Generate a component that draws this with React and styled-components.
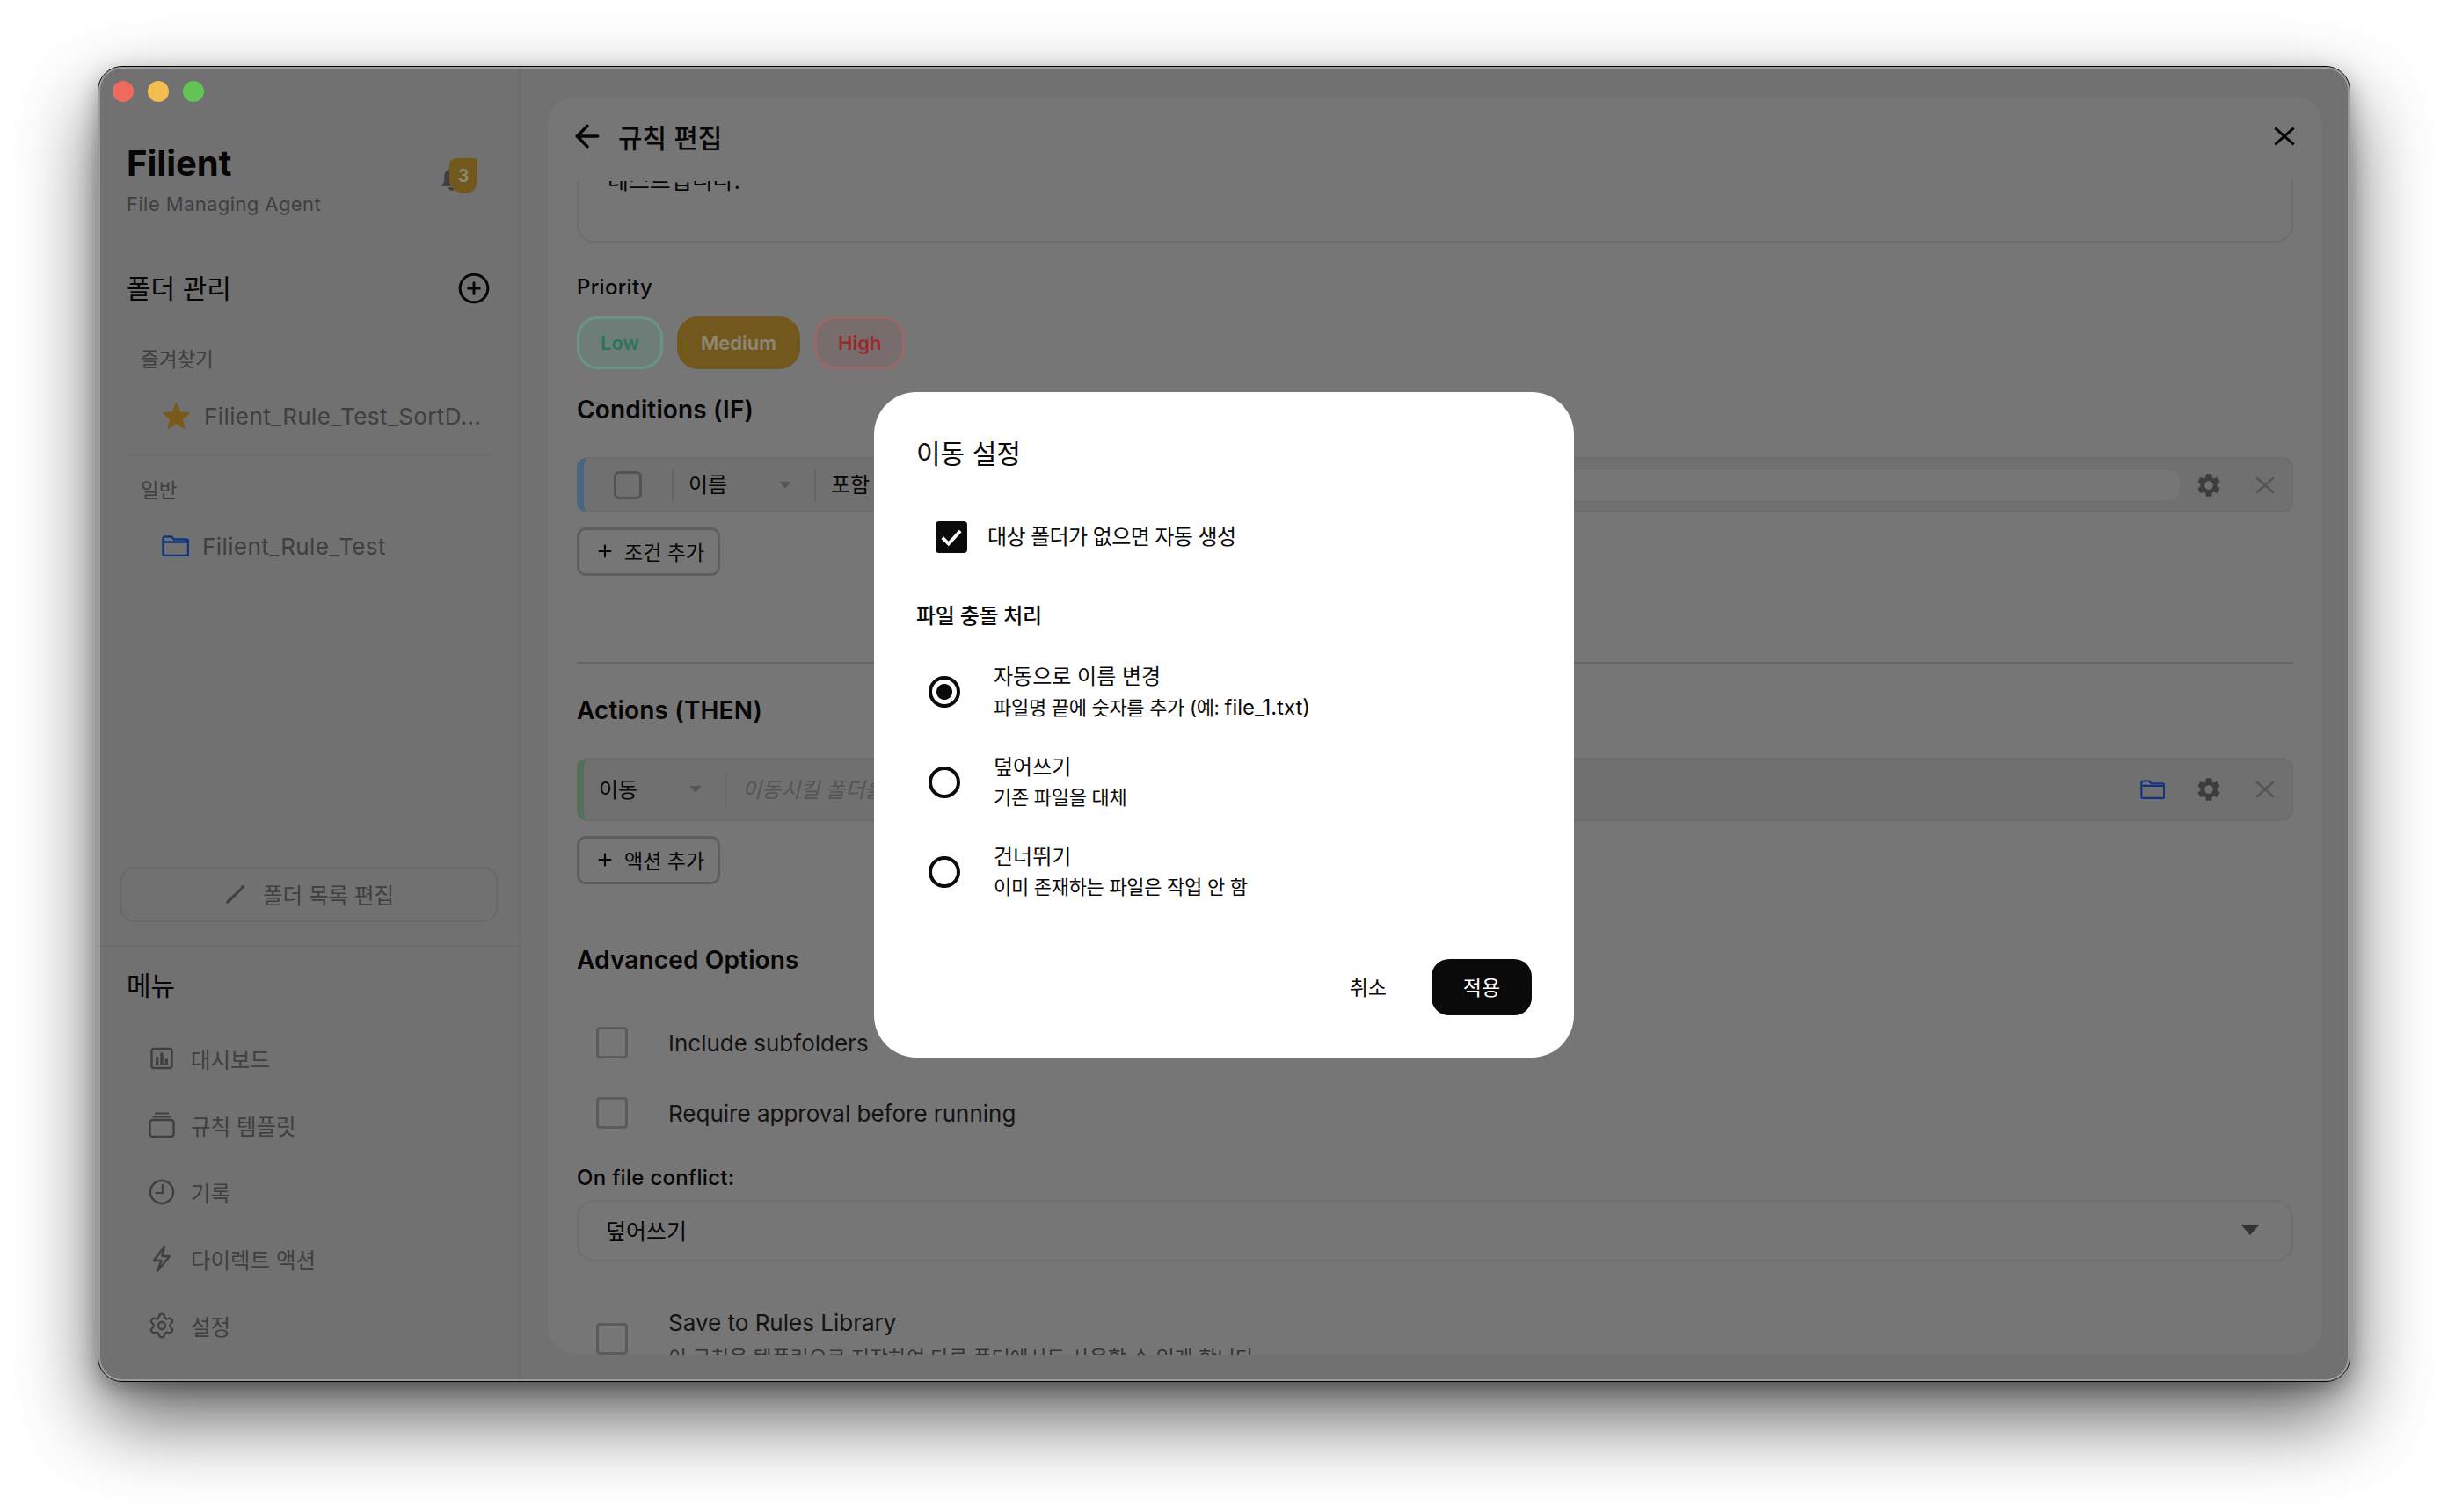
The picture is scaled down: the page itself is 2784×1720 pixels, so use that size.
import React from "react";
import styled, { createGlobalStyle } from "styled-components";
import { ArrowLeft, CirclePlus, Plus, Settings } from "lucide-react";
import { MdSettings } from "react-icons/md";

const GlobalStyle = createGlobalStyle`
  html, body {
    margin: 0;
    padding: 0;
    background: #fff;
  }
  * {
    box-sizing: border-box;
  }
  body {
    font-family: Inter, "Noto Sans CJK KR", "Liberation Sans", sans-serif;
    color: #0a0a0a;
  }
`;

const Star = () => (
  <svg width="33" height="32" viewBox="0 0 31 30">
    <path
      d="M15.5 2l3.8 9.2 10 .8-7.6 6.5 2.4 9.7-8.6-5.2-8.6 5.2 2.4-9.7L1.7 12l10-.8z"
      fill="#cd962b"
      stroke="#cd962b"
      strokeWidth="1.5"
      strokeLinejoin="round"
    />
  </svg>
);

const FolderGlyph = ({ width = 31, height = 24 }) => (
  <svg width={width} height={height} viewBox="0 0 31 24" fill="none">
    <path
      d="M1.5 3.5a2 2 0 0 1 2-2h7.5l3 3h14a2 2 0 0 1 2 2v15a1.5 1.5 0 0 1-1.5 1.5H3a1.5 1.5 0 0 1-1.5-1.5zM1.5 7.5h28"
      stroke="#1e58d3"
      strokeWidth="2.4"
    />
  </svg>
);

const Pencil = () => (
  <svg width="24" height="24" viewBox="0 0 24 24" fill="none">
    <path d="M2 22l1-3.5L19 3.5l2 2L5.5 21z" fill="#696969" />
    <circle cx="21" cy="3" r="2" fill="#696969" />
  </svg>
);

const Dashboard = () => (
  <svg width="26" height="26" viewBox="0 0 26 26" fill="none">
    <rect x="1.5" y="2" width="23" height="22" rx="2.5" stroke="#696969" strokeWidth="2.4" />
    <rect x="6" y="11" width="3.4" height="9" fill="#696969" />
    <rect x="11.3" y="6.5" width="3.4" height="13.5" fill="#696969" />
    <rect x="16.6" y="13.5" width="3.4" height="6.5" fill="#696969" />
  </svg>
);

const Templates = () => (
  <svg width="30" height="30" viewBox="0 0 30 30" fill="none">
    <path d="M7 1.5h16M4.5 5.5h21" stroke="#696969" strokeWidth="2" />
    <rect x="1.5" y="9" width="27" height="19" rx="3" stroke="#696969" strokeWidth="2.4" />
  </svg>
);

const Clock = () => (
  <svg width="30" height="30" viewBox="0 0 30 30" fill="none">
    <circle cx="15" cy="15" r="13" stroke="#696969" strokeWidth="2.4" />
    <path d="M16 6v10H7.5" stroke="#696969" strokeWidth="2.2" />
  </svg>
);

const Bolt = () => (
  <svg width="24" height="32" viewBox="0 0 24 32" fill="none">
    <path
      d="M15 2L3 18h8.5L7 30 21 13h-8.5z"
      stroke="#696969"
      strokeWidth="2.4"
      strokeLinejoin="round"
    />
  </svg>
);

const Cross = ({ size = 22, color = "#8e8e8e", weight = 2.4 }) => (
  <svg width={size} height={size} viewBox="0 0 22 22" fill="none">
    <path d="M2 3l18 16M20 3L2 19" stroke={color} strokeWidth={weight} />
  </svg>
);

const Check = () => (
  <svg width="30" height="30" viewBox="0 0 28 28" fill="none">
    <path d="M4.5 14.5l6.5 6.5L23.5 7.5" stroke="#fff" strokeWidth="3.6" />
  </svg>
);

const Caret = ({ size = 14, color = "#8e8e8e" }) => (
  <svg width={size} height={size * 0.55} viewBox="0 0 14 8">
    <path d="M0 0h14L7 8z" fill={color} />
  </svg>
);

const menuItems = [
  { label: "대시보드", icon: <Dashboard /> },
  { label: "규칙 템플릿", icon: <Templates /> },
  { label: "기록", icon: <Clock /> },
  { label: "다이렉트 액션", icon: <Bolt /> },
  { label: "설정", icon: <Settings size={32} color="#696969" strokeWidth={1.7} /> },
];

const conflictOptions = [
  { title: "자동으로 이름 변경", desc: "파일명 끝에 숫자를 추가 (예: ", latin: "file_1.txt)", selected: true },
  { title: "덮어쓰기", desc: "기존 파일을 대체" },
  { title: "건너뛰기", desc: "이미 존재하는 파일은 작업 안 함" },
];

const App = () => {
  return (
    <Page>
      <GlobalStyle />
      <Window>
        <Sidebar>
          <TrafficLights>
            <Light $color="#f0695f" />
            <Light $color="#f4bd4f" />
            <Light $color="#61c454" />
          </TrafficLights>

          <BrandRow>
            <div>
              <Brand>Filient</Brand>
              <BrandSub>File Managing Agent</BrandSub>
            </div>
            <BellWrap>
              <BellIcon viewBox="0 0 24 24">
                <path
                  d="M12 3a7 7 0 0 0-7 7v5l-3 4h20l-3-4v-5a7 7 0 0 0-7-7zM9 20a3 3 0 0 0 6 0z"
                  fill="#696969"
                />
              </BellIcon>
              <Badge>3</Badge>
            </BellWrap>
          </BrandRow>

          <SectionHead>
            <SectionTitle>폴더 관리</SectionTitle>
            <CirclePlus size={38} color="#0a0a0a" strokeWidth={1.9} />
          </SectionHead>

          <GroupLabel $top={45}>즐겨찾기</GroupLabel>
          <FolderRow $top={26}>
            <Star />
            <FolderName>Filient_Rule_Test_SortD...</FolderName>
          </FolderRow>
          <SideRule />
          <GroupLabel $top={24}>일반</GroupLabel>
          <FolderRow $top={25}>
            <FolderGlyph />
            <FolderName>Filient_Rule_Test</FolderName>
          </FolderRow>

          <Spacer />

          <EditFolders>
            <Pencil />
            <span>폴더 목록 편집</span>
          </EditFolders>

          <MenuSection>
            <MenuTitle>메뉴</MenuTitle>
            <MenuList>
              {menuItems.map((item) => (
                <MenuItem key={item.label}>
                  <MenuIcon>{item.icon}</MenuIcon>
                  {item.label}
                </MenuItem>
              ))}
            </MenuList>
          </MenuSection>
        </Sidebar>

        <Main>
          <Panel>
            <PanelHeader>
              <HeaderLeft>
                <ArrowLeft size={40} color="#0a0a0a" strokeWidth={2.1} />
                <PanelTitle>규칙 편집</PanelTitle>
              </HeaderLeft>
              <Cross size={26} color="#0a0a0a" weight={2.6} />
            </PanelHeader>

            <PanelBody>
              <Content>
                <DescBox>테스트입니다.</DescBox>

                <FieldLabel $top={35}>Priority</FieldLabel>
                <Pills>
                  <Pill $border="#aff9e1" $bg="#b9d0c9" $color="#46c593">Low</Pill>
                  <Pill $border="#be932f" $bg="#be932f" $color="#e9e1c8">Medium</Pill>
                  <Pill $border="#ffadad" $bg="#c9b6b6" $color="#ff4646">High</Pill>
                </Pills>

                <Heading $top={26}>Conditions (IF)</Heading>
                <RuleRow $accent="#7baad5" $height={63} $top={34}>
                  <CheckCell>
                    <RowCheck />
                  </CheckCell>
                  <SelectCell>
                    <span>이름</span>
                    <Caret />
                  </SelectCell>
                  <SelectCell>
                    <span>포함</span>
                  </SelectCell>
                  <ValueInput />
                  <RowIcons>
                    <IconCell>
                      <MdSettings size={32} color="#666" />
                    </IconCell>
                    <IconCell>
                      <Cross size={24} />
                    </IconCell>
                  </RowIcons>
                </RuleRow>
                <AddButton $top={17}>
                  <Plus size={22} color="#0a0a0a" strokeWidth={2.4} />
                  <span>조건 추가</span>
                </AddButton>

                <Rule />

                <Heading $top={33}>Actions (THEN)</Heading>
                <RuleRow $accent="#8ebb96" $height={72} $top={34}>
                  <SelectCell>
                    <span>이동</span>
                    <Caret />
                  </SelectCell>
                  <Placeholder>이동시킬 폴더를 선택하세요</Placeholder>
                  <RowIcons>
                    <IconCell>
                      <FolderGlyph width={28} height={22} />
                    </IconCell>
                    <IconCell>
                      <MdSettings size={32} color="#666" />
                    </IconCell>
                    <IconCell>
                      <Cross size={24} />
                    </IconCell>
                  </RowIcons>
                </RuleRow>
                <AddButton $top={17}>
                  <Plus size={22} color="#0a0a0a" strokeWidth={2.4} />
                  <span>액션 추가</span>
                </AddButton>

                <Heading $top={66}>Advanced Options</Heading>
                <OptionList>
                  <OptionRow>
                    <OptionCheck />
                    Include subfolders
                  </OptionRow>
                  <OptionRow>
                    <OptionCheck />
                    Require approval before running
                  </OptionRow>
                </OptionList>

                <FieldLabel $top={18}>On file conflict:</FieldLabel>
                <ConflictSelect>
                  <span>덮어쓰기</span>
                  <Caret size={22} color="#555" />
                </ConflictSelect>

                <SaveRow>
                  <SaveCheck />
                  <div>
                    <SaveTitle>Save to Rules Library</SaveTitle>
                    <SaveDesc>이 규칙을 템플릿으로 저장하여 다른 폴더에서도 사용할 수 있게 합니다</SaveDesc>
                  </div>
                </SaveRow>
              </Content>
            </PanelBody>
          </Panel>
        </Main>

        <Overlay>
          <Dialog>
            <DialogTitle>이동 설정</DialogTitle>
            <AutoCreate>
              <CheckedBox>
                <Check />
              </CheckedBox>
              대상 폴더가 없으면 자동 생성
            </AutoCreate>

            <DialogLabel>파일 충돌 처리</DialogLabel>
            <RadioList>
              {conflictOptions.map((option) => (
                <RadioRow key={option.title}>
                  <Radio $selected={option.selected} />
                  <div>
                    <RadioTitle>{option.title}</RadioTitle>
                    <RadioDesc>
                      {option.desc}
                      {option.latin && <DescLatin>{option.latin}</DescLatin>}
                    </RadioDesc>
                  </div>
                </RadioRow>
              ))}
            </RadioList>

            <DialogActions>
              <CancelButton>취소</CancelButton>
              <ApplyButton>적용</ApplyButton>
            </DialogActions>
          </Dialog>
        </Overlay>
      </Window>
    </Page>
  );
};

export default App;

const Page = styled.div`
  width: 2784px;
  height: 1720px;
  padding: 75px 111px 148px;
  background: #fff;
  overflow: hidden;
`;

const Window = styled.div`
  position: relative;
  display: flex;
  width: 2562px;
  height: 1497px;
  border: 1px solid #000;
  border-radius: 28px;
  background: #bcbcbc;
  box-shadow: 0 42px 90px rgba(0, 0, 0, 0.62), 0 8px 24px rgba(0, 0, 0, 0.3);
`;

const Sidebar = styled.aside`
  display: flex;
  flex-direction: column;
  flex: none;
  width: 480px;
  border-right: 2px solid #b4b4b4;
`;

const TrafficLights = styled.div`
  display: flex;
  gap: 16px;
  padding: 16px 0 0 16px;
`;

const Light = styled.span`
  width: 24px;
  height: 24px;
  border-radius: 50%;
  background: ${({ $color }) => $color};
  position: relative;
  z-index: 2;
`;

const BrandRow = styled.div`
  display: flex;
  justify-content: space-between;
  align-items: flex-start;
  margin-top: 46px;
  padding: 0 47px 0 32px;
`;

const Brand = styled.div`
  font-size: 40px;
  line-height: 48px;
  font-weight: 700;
`;

const BrandSub = styled.div`
  margin-top: 6px;
  font-size: 22px;
  line-height: 32px;
  letter-spacing: 0.4px;
  color: #696969;
`;

const BellWrap = styled.div`
  position: relative;
  width: 44px;
  height: 40px;
  margin-top: 18px;
`;

const BellIcon = styled.svg`
  position: absolute;
  left: 0;
  top: 8px;
  width: 30px;
  height: 30px;
`;

const Badge = styled.span`
  position: absolute;
  right: 0;
  top: 0;
  display: flex;
  align-items: center;
  justify-content: center;
  width: 32px;
  height: 40px;
  border-radius: 8px 3px 14px 16px;
  background: #be932f;
  color: #e9e1c8;
  font-size: 20px;
  font-weight: 600;
`;

const SectionHead = styled.div`
  display: flex;
  justify-content: space-between;
  align-items: center;
  height: 40px;
  margin-top: 60px;
  padding: 0 32px;
`;

const SectionTitle = styled.div`
  font-size: 30px;
  line-height: 40px;
  font-weight: 400;
`;

const GroupLabel = styled.div`
  margin-top: ${({ $top }) => $top}px;
  padding-left: 48px;
  font-size: 22.5px;
  line-height: 32px;
  color: #696969;
`;

const FolderRow = styled.div`
  display: flex;
  align-items: center;
  gap: 15px;
  height: 44px;
  margin-top: ${({ $top }) => $top}px;
  padding-left: 72px;
`;

const FolderName = styled.span`
  font-size: 26px;
  letter-spacing: 0.4px;
  color: #696969;
  white-space: nowrap;
`;

const SideRule = styled.div`
  height: 2px;
  margin: 21px 31px 0 32px;
  background: #b4b4b4;
`;

const Spacer = styled.div`
  flex: 1;
`;

const EditFolders = styled.div`
  display: flex;
  align-items: center;
  justify-content: center;
  gap: 20px;
  height: 63px;
  margin: 0 24px 26px 25px;
  border: 2px solid #afafaf;
  border-radius: 16px;
  font-size: 24.5px;
  color: #696969;
`;

const MenuSection = styled.nav`
  border-top: 2px solid #b4b4b4;
  padding-bottom: 25px;
`;

const MenuTitle = styled.div`
  margin-top: 24px;
  padding-left: 32px;
  font-size: 30px;
  line-height: 40px;
`;

const MenuList = styled.div`
  margin-top: 25px;
`;

const MenuItem = styled.div`
  display: flex;
  align-items: center;
  gap: 15px;
  height: 76px;
  padding-left: 54px;
  font-size: 24.5px;
  color: #696969;
`;

const MenuIcon = styled.span`
  display: flex;
  align-items: center;
  justify-content: center;
  width: 36px;
`;

const Main = styled.main`
  flex: 1;
  display: flex;
  min-width: 0;
  padding: 34px 31px 30px 31px;
`;

const Panel = styled.section`
  flex: 1;
  display: flex;
  flex-direction: column;
  min-width: 0;
  border-radius: 32px;
  background: #c5c5c5;
  overflow: hidden;
`;

const PanelHeader = styled.header`
  display: flex;
  align-items: center;
  justify-content: space-between;
  flex: none;
  height: 96px;
  padding: 0 30px 6px 25px;
`;

const HeaderLeft = styled.div`
  display: flex;
  align-items: center;
  gap: 15px;
`;

const PanelTitle = styled.h1`
  margin: 0;
  font-size: 30px;
  font-weight: 500;
`;

const PanelBody = styled.div`
  flex: 1;
  min-height: 0;
  overflow: hidden;
`;

const Content = styled.div`
  margin-top: -40px;
  padding: 0 33px 0 33px;
`;

const DescBox = styled.div`
  height: 110px;
  padding: 21px 33px;
  border: 2px solid #b8b8b8;
  border-radius: 20px;
  font-size: 26px;
  line-height: 34px;
`;

const FieldLabel = styled.div`
  margin-top: ${({ $top }) => $top}px;
  font-size: 24px;
  line-height: 32px;
  letter-spacing: 0.3px;
  font-weight: 500;
`;

const Pills = styled.div`
  display: flex;
  gap: 16px;
  margin-top: 17px;
`;

const Pill = styled.div`
  display: flex;
  align-items: center;
  height: 60px;
  padding: 0 24px;
  border: 3px solid ${({ $border }) => $border};
  border-radius: 24px;
  background: ${({ $bg }) => $bg};
  color: ${({ $color }) => $color};
  font-size: 22px;
  font-weight: 600;
`;

const Heading = styled.h2`
  margin: ${({ $top }) => $top}px 0 0;
  font-size: 28px;
  line-height: 40px;
  letter-spacing: 0.15px;
  font-weight: 600;
`;

const RuleRow = styled.div`
  display: flex;
  align-items: center;
  height: ${({ $height }) => $height}px;
  margin-top: ${({ $top }) => $top}px;
  border: 2px solid #b5b5b5;
  border-left: 8px solid ${({ $accent }) => $accent};
  border-radius: 12px;
  background: #bbb;
`;

const CheckCell = styled.div`
  display: flex;
  align-items: center;
  justify-content: center;
  width: 102px;
  height: 38px;
  border-right: 2px solid #a8a8a8;
`;

const RowCheck = styled.span`
  width: 32px;
  height: 32px;
  border: 3px solid #8a8a8a;
  border-radius: 6px;
`;

const SelectCell = styled.div`
  display: flex;
  align-items: center;
  justify-content: space-between;
  width: 162px;
  height: 38px;
  padding: 0 26px 4px 17px;
  border-right: 2px solid #a8a8a8;
  font-size: 24px;

  svg {
    margin-top: 4px;
  }
`;

const ValueInput = styled.div`
  flex: 1;
  height: 34px;
  margin-left: 12px;
  border-radius: 10px;
  background: #c5c5c5;
`;

const Placeholder = styled.div`
  flex: 1;
  padding: 0 0 4px 18px;
  font-size: 24px;
  font-style: italic;
  color: #8e8e8e;
`;

const RowIcons = styled.div`
  display: flex;
  align-items: center;
  gap: 28px;
  padding: 0 12px 0 15px;
`;

const IconCell = styled.span`
  display: flex;
  align-items: center;
  justify-content: center;
  width: 36px;
`;

const AddButton = styled.div`
  display: flex;
  align-items: center;
  gap: 11px;
  width: 163px;
  height: 55px;
  margin-top: ${({ $top }) => $top}px;
  padding: 0 0 2px 18px;
  border: 3px solid #9d9d9d;
  border-radius: 10px;
  font-size: 23px;
  white-space: nowrap;
`;

const Rule = styled.div`
  height: 2px;
  margin-top: 98px;
  background: #a8a8a8;
`;

const OptionList = styled.div`
  margin-top: 34px;
`;

const OptionRow = styled.div`
  display: flex;
  align-items: center;
  gap: 46px;
  height: 80px;
  padding-left: 22px;
  font-size: 26px;
  color: #222;
`;

const OptionCheck = styled.span`
  flex: none;
  width: 36px;
  height: 36px;
  border: 3px solid #9a9a9a;
  border-radius: 4px;
`;

const SaveCheck = styled(OptionCheck)`
  margin-top: 18px;
`;

const ConflictSelect = styled.div`
  display: flex;
  align-items: center;
  justify-content: space-between;
  height: 70px;
  margin-top: 9px;
  padding: 0 36px 2px 31px;
  border: 2px solid #b8b8b8;
  border-radius: 20px;
  font-size: 25px;
`;

const SaveRow = styled.div`
  display: flex;
  align-items: flex-start;
  gap: 46px;
  margin-top: 52px;
  padding-left: 22px;
`;

const SaveTitle = styled.div`
  font-size: 26px;
  line-height: 36px;
  color: #222;
`;

const SaveDesc = styled.div`
  margin-top: 6px;
  font-size: 22.8px;
  line-height: 32px;
  color: #555;
  white-space: nowrap;
`;

const Overlay = styled.div`
  position: absolute;
  inset: 0;
  display: flex;
  align-items: center;
  justify-content: center;
  border-radius: 27px;
  background: rgba(0, 0, 0, 0.4);
  box-shadow: inset 0 0 0 2px rgba(255, 255, 255, 0.3);
`;

const Dialog = styled.div`
  width: 796px;
  height: 757px;
  margin-top: 2px;
  padding: 50px 48px 48px;
  border-radius: 48px;
  background: #fff;
`;

const DialogTitle = styled.h3`
  margin: 0;
  font-size: 30px;
  line-height: 40px;
  font-weight: 400;
`;

const AutoCreate = styled.div`
  display: flex;
  align-items: center;
  gap: 23px;
  margin: 57px 0 0 22px;
  font-size: 24px;
  line-height: 36px;
  letter-spacing: -0.6px;
`;

const CheckedBox = styled.span`
  display: flex;
  align-items: center;
  justify-content: center;
  width: 36px;
  height: 36px;
  border-radius: 4px;
  background: #0a0a0a;
`;

const DialogLabel = styled.div`
  margin-top: 56px;
  font-size: 24px;
  line-height: 32px;
  font-weight: 500;
  letter-spacing: -0.3px;
`;

const RadioList = styled.div`
  display: flex;
  flex-direction: column;
  gap: 32.5px;
  margin-top: 35px;
`;

const RadioRow = styled.div`
  display: flex;
  align-items: center;
  gap: 38px;
  height: 70px;
  padding-left: 14px;
`;

const Radio = styled.span`
  flex: none;
  width: 36px;
  height: 36px;
  border: 4px solid #0a0a0a;
  border-radius: 50%;
  background: ${({ $selected }) =>
    $selected ? "radial-gradient(circle, #0a0a0a 0 8.5px, #fff 9.5px)" : "#fff"};
`;

const RadioTitle = styled.div`
  font-size: 24px;
  line-height: 35px;
`;

const RadioDesc = styled.div`
  font-size: 22px;
  line-height: 35px;
  letter-spacing: -0.3px;
`;

const DescLatin = styled.span`
  font-size: 24px;
  letter-spacing: 0;
`;

const DialogActions = styled.div`
  display: flex;
  justify-content: flex-end;
  align-items: center;
  gap: 27px;
  margin-top: 64px;
`;

const CancelButton = styled.div`
  padding: 0 24px 2px;
  font-size: 23px;
`;

const ApplyButton = styled.div`
  display: flex;
  align-items: center;
  justify-content: center;
  width: 114px;
  height: 64px;
  padding-bottom: 2px;
  border-radius: 20px;
  background: #0a0a0a;
  color: #fff;
  font-size: 23px;
`;
